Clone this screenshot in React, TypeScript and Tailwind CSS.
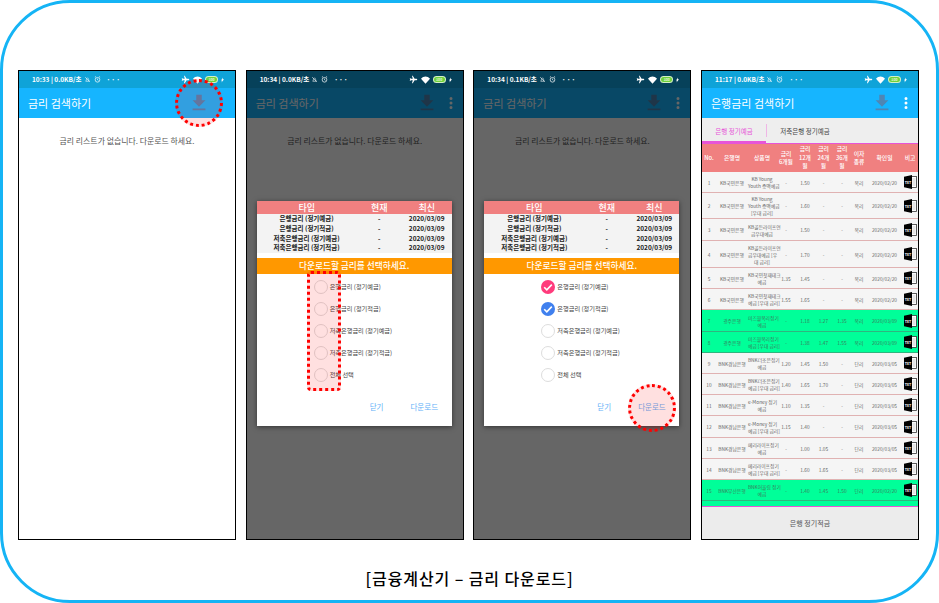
const KR = "font-['Noto_Sans_CJK_KR','Noto_Sans',sans-serif]";

const DownloadIcon = () => (
  <svg viewBox="0 0 24 24" className="w-[22px] h-[22px]" fill="#4f86b4">
    <path d="M19 9h-4V3H9v6H5l7 7 7-7zM5 18v2h14v-2H5z" />
  </svg>
);

const Dots = () => (
  <svg viewBox="0 0 24 24" className="w-[18px] h-[18px]" fill="#ffffff">
    <path d="M12 8a2 2 0 1 0 0-4 2 2 0 0 0 0 4zm0 2a2 2 0 1 0 0 4 2 2 0 0 0 0-4zm0 6a2 2 0 1 0 0 4 2 2 0 0 0 0-4z" />
  </svg>
);

const StatusBar = ({ time, speed, dim = false }: { time: string; speed: string; dim?: boolean }) => (
  <div className={`h-[17px] ${dim ? "bg-[#06415a]" : "bg-[#0fa3d8]"} flex items-center pl-[13px] pr-[11px] text-white text-[6.500px] font-bold shrink-0`}>
    <span>{time} | {speed}/초</span>
    <svg viewBox="0 0 12 12" className="w-[7px] h-[7px] ml-[2px]" fill="none" stroke="#fff" strokeWidth="1">
      <path d="M3 9c1-1 1-5 3-6 2 1 2 5 3 6zM2 2l8 8" />
    </svg>
    <svg viewBox="0 0 12 12" className="w-[7px] h-[7px] ml-[3px]" fill="none" stroke="#fff" strokeWidth="1.2">
      <circle cx="6" cy="6.5" r="4" />
      <path d="M6 4.5v2l1.500 1M1.500 2l2-1M10.500 2l-2-1" />
    </svg>
    <span className="ml-[6px] tracking-[1px]">···</span>
    <div className="flex-1" />
    <svg viewBox="0 0 12 12" className="w-[9px] h-[9px]" fill="#fff">
      <path d="M11 6c0-.5-.5-1-1-1H7.500L5 1H4l1 4H2.500L1.500 4H1l.5 2-.5 2h.5l1-1H5L4 11h1l2.500-4H10c.5 0 1-.5 1-1z" />
    </svg>
    <svg viewBox="0 0 12 10" className="w-[9px] h-[8px] ml-[3px]" fill="#fff">
      <path d="M0 3.200C3.500-.5 8.500-.5 12 3.200L6 10z" />
    </svg>
    <div className="ml-[3px] w-[13px] h-[7px] rounded-full border border-white/70 bg-[#6fd13c] flex items-center justify-center text-[3.500px] text-white/80">
      100
    </div>
    <svg viewBox="0 0 6 10" className="w-[3px] h-[6px] ml-[3px]" fill="#fff">
      <path d="M4 0L0 6h2L1 10l5-6.500H3.500z" />
    </svg>
  </div>
);

const AppHeader = ({ title, dots = true }: { title: string; dots?: boolean }) => (
  <div className="h-[30px] bg-[#16b5ff] flex items-center pl-[9px] pr-[3px] shrink-0">
    <span className="text-white text-[11px] flex-1">{title}</span>
    <div className="mr-[4px]"><DownloadIcon /></div>
    <div className="w-[18px] flex justify-center">{dots ? <Dots /> : null}</div>
  </div>
);

const Empty = () => (
  <div className="flex-1 bg-white pt-[16px] text-center text-[7.900px] leading-[14px] text-[#555]">
    금리 리스트가 없습니다. 다운로드 하세요.
  </div>
);

const Phone = ({ children }: { children: React.ReactNode }) => (
  <div className="relative w-[218px] h-[470px] border border-black bg-white flex flex-col overflow-hidden">
    {children}
  </div>
);

const dlRows = [
  ["은행금리 (정기예금)", "2020/03/09"],
  ["은행금리 (정기적금)", "2020/03/09"],
  ["저축은행금리 (정기예금)", "2020/03/09"],
  ["저축은행금리 (정기적금)", "2020/03/09"],
];

const Radio = ({ kind }: { kind: "none" | "pink" | "blue" }) => {
  if (kind === "none") {
    return <div className="w-[14px] h-[14px] rounded-full border-[1.500px] border-[#dddddd] bg-white" />;
  }
  return (
    <div className={kind === "pink" ? "w-[14px] h-[14px] rounded-full bg-[#ff3b7c] flex items-center justify-center" : "w-[14px] h-[14px] rounded-full bg-[#4080ee] flex items-center justify-center"}>
      <svg viewBox="0 0 14 14" className="w-[14px] h-[14px]" fill="none" stroke="#fff" strokeWidth="1.600">
        <path d="M3.200 7.200l2.600 2.600 5-5.200" />
      </svg>
    </div>
  );
};

const Dialog = ({ checks }: { checks: ("none" | "pink" | "blue")[] }) => {
  const opts = ["은행금리 (정기예금)", "은행금리 (정기적금)", "저축은행금리 (정기예금)", "저축은행금리 (정기적금)", "전체 선택"];
  return (
    <div className="absolute left-0 right-0 bottom-0 top-[17px] bg-black/60 pt-[113px] pl-[10px]">
      <div className="w-[195px] h-[225px] bg-white shadow-[0_1px_5px_rgba(0,0,0,0.5)] flex flex-col">
        <div className="grid grid-cols-[100px_45px_50px] h-[13px] bg-[#f08080] text-white text-[9px] leading-[13px] font-medium text-center">
          <span>타입</span><span>현재</span><span>최신</span>
        </div>
        <div className="bg-[#f3f3f3]">
          {dlRows.map((r) => (
            <div key={r[0]} className="grid grid-cols-[100px_45px_50px] h-[9.750px] text-[6.500px] leading-[9.750px] font-bold text-center text-[#222]">
              <span>{r[0]}</span><span>-</span><span>{r[1]}</span>
            </div>
          ))}
        </div>
        <div className="mt-[5px] h-[16px] bg-[#ff9800] text-white text-[8.700px] leading-[16px] font-medium text-center">
          다운로드할 금리를 선택하세요.
        </div>
        <div className="pt-[2px] pl-[57px]">
          {opts.map((o, i) => (
            <div key={o} className="h-[22px] flex items-center gap-[2px] text-[6.200px] text-[#444]">
              <Radio kind={checks[i]} />
              <span>{o}</span>
            </div>
          ))}
        </div>
        <div className="mt-[9px] flex text-[7.500px] leading-[24px] text-[#62b0f7]">
          <span className="ml-[113px]">닫기</span>
          <span className="ml-[27px]">다운로드</span>
        </div>
      </div>
    </div>
  );
};

type Row = { p: string; bank: string; name: string; r: string[]; t: string; d: string; h: string; g?: boolean };

const cols = "grid grid-cols-[14px_32px_28px_20px_18px_19px_18px_16px_35px_16px]";
const A = "KB국민은행", B = "BNK경남은행";
const rows: Row[] = [
  { p: "1", bank: A, name: "KB Young\nYouth 증액예금", r: ["-", "1.50", "-", "-"], t: "복리", d: "2020/02/20", h: "h-[21px]" },
  { p: "2", bank: A, name: "KB Young\nYouth 증액예금\n[우대 금리]", r: ["-", "1.60", "-", "-"], t: "복리", d: "2020/02/20", h: "h-[26px]" },
  { p: "3", bank: A, name: "KB골든라이프연\n금우대예금", r: ["-", "1.50", "-", "-"], t: "복리", d: "2020/02/20", h: "h-[22px]" },
  { p: "4", bank: A, name: "KB골든라이프연\n금우대예금 [우\n대 금리]", r: ["-", "1.70", "-", "-"], t: "복리", d: "2020/02/20", h: "h-[27px]" },
  { p: "5", bank: A, name: "KB국민첫재테크\n예금", r: ["1.35", "1.45", "-", "-"], t: "복리", d: "2020/02/20", h: "h-[21px]" },
  { p: "6", bank: A, name: "KB국민첫재테크\n예금 [우대 금리]", r: ["1.55", "1.65", "-", "-"], t: "복리", d: "2020/02/20", h: "h-[21px]" },
  { p: "7", bank: "광주은행", name: "미즈월복리정기\n예금", r: ["-", "1.18", "1.27", "1.35"], t: "복리", d: "2020/03/09", h: "h-[22px]", g: true },
  { p: "8", bank: "광주은행", name: "미즈월복리정기\n예금 [우대 금리]", r: ["-", "1.38", "1.47", "1.55"], t: "복리", d: "2020/03/09", h: "h-[21px]", g: true },
  { p: "9", bank: B, name: "BNK더조은정기\n예금", r: ["1.20", "1.45", "1.50", "-"], t: "단리", d: "2020/03/05", h: "h-[21px]" },
  { p: "10", bank: B, name: "BNK더조은정기\n예금 [우대 금리]", r: ["1.40", "1.65", "1.70", "-"], t: "단리", d: "2020/03/05", h: "h-[21px]" },
  { p: "11", bank: B, name: "e-Money 정기\n예금", r: ["1.10", "1.35", "-", "-"], t: "단리", d: "2020/03/05", h: "h-[21px]" },
  { p: "12", bank: B, name: "e-Money 정기\n예금 [우대 금리]", r: ["1.15", "1.40", "-", "-"], t: "단리", d: "2020/03/05", h: "h-[22px]" },
  { p: "13", bank: B, name: "메리라이프정기\n예금", r: ["-", "1.00", "1.05", "-"], t: "단리", d: "2020/03/05", h: "h-[21px]" },
  { p: "14", bank: B, name: "메리라이프정기\n예금 [우대 금리]", r: ["-", "1.60", "1.65", "-"], t: "단리", d: "2020/03/05", h: "h-[21px]" },
  { p: "15", bank: "BNK부산은행", name: "BNK어울림 정기\n예금", r: ["-", "1.40", "1.45", "1.50"], t: "단리", d: "2020/02/20", h: "h-[21px]", g: true },
];

const TxtIcon = () => (
  <svg viewBox="0 0 13 14" className="w-[13px] h-[14px]">
    <rect x="7" y="1.500" width="5.500" height="11" fill="#fff" stroke="#333" strokeWidth="0.800" />
    <path d="M8.500 4h3M8.500 6h3M8.500 8h3M8.500 10h3" stroke="#aaa" strokeWidth="0.600" />
    <path d="M0 1.800L8 0v14L0 12.200z" fill="#000" />
    <text x="4" y="8.700" fontSize="3.600" fontWeight="700" fill="#fff" textAnchor="middle">TXT</text>
  </svg>
);

const headCells = ["No.", "은행명", "상품명", "금리\n6개월", "금리\n12개\n월", "금리\n24개\n월", "금리\n36개\n월", "이자\n종류", "확인일", "비고"];

const RateTable = () => (
  <div className="flex-1 min-h-0 overflow-hidden flex flex-col">
    <div className={`${cols} h-[28px] shrink-0 bg-[#f08080] text-white text-[5.800px] leading-[8.500px] font-medium text-center items-center whitespace-pre-line`}>
      {headCells.map((c) => <span key={c}>{c}</span>)}
    </div>
    {rows.map((x) => (
      <div
        key={x.p}
        className={`${cols} ${x.h} shrink-0 items-center text-center text-[4.800px] leading-[7px] border-b-[1.500px] ${x.g ? "bg-[#00ff99] border-[#2fb57f] text-[#3d7a5c]" : "bg-[#f5f5f5] border-[#e0b2b2] text-[#666]"}`}
      >
        <span>{x.p}</span>
        <span className="whitespace-nowrap">{x.bank}</span>
        <span className="whitespace-pre">{x.name}</span>
        {x.r.map((v, i) => <span key={i}>{v}</span>)}
        <span>{x.t}</span>
        <span>{x.d}</span>
        <span className="flex justify-center pl-[2px]"><TxtIcon /></span>
      </div>
    ))}
    <div className="flex-1 bg-[#00ff99]" />
  </div>
);

const Tabs = () => (
  <div className="h-[26px] bg-[#eeeeee] border-b border-[#e754d8] flex shrink-0 text-[6.500px]">
    <div className="w-[64px] border-b-[3px] border-[#e754d8] text-[#e754d8] text-center leading-[26px] h-[26px]">
      은행 정기예금
    </div>
    <div className="w-px h-[13px] mt-[6px] bg-[#efb6e6]" />
    <div className="w-[76px] text-center leading-[26px] text-[#444]">저축은행 정기예금</div>
  </div>
);

export default function App() {
  return (
    <div className={`${KR} w-[939px] h-[603px] bg-white rounded-[70px] border-[3px] border-[#15b4f5] overflow-hidden`}>
      <div className="pt-[67px] pl-[15px] pr-[17px] flex justify-between">
        <Phone>
          <StatusBar time="10:33" speed="0.0KB" />
          <AppHeader title="금리 검색하기" dots={false} />
          <Empty />
          <div className="absolute left-[156px] top-[8px] w-[48px] h-[48px] rounded-full border-[3px] border-dotted border-[#ff0000] bg-[#ff0000]/12" />
        </Phone>
        <Phone>
          <StatusBar time="10:34" speed="0.0KB" dim />
          <AppHeader title="금리 검색하기" />
          <Empty />
          <Dialog checks={["none", "none", "none", "none", "none"]} />
          <div className="absolute left-[60px] top-[200px] w-[34px] h-[120px] rounded-[4px] border-[3px] border-dotted border-[#ff0000] bg-[#ff0000]/12" />
        </Phone>
        <Phone>
          <StatusBar time="10:34" speed="0.1KB" dim />
          <AppHeader title="금리 검색하기" />
          <Empty />
          <Dialog checks={["pink", "blue", "none", "none", "none"]} />
          <div className="absolute left-[154px] top-[313px] w-[48px] h-[48px] rounded-full border-[3px] border-dotted border-[#ff0000] bg-[#ff0000]/12" />
        </Phone>
        <Phone>
          <StatusBar time="11:17" speed="0.0KB" />
          <AppHeader title="은행금리 검색하기" />
          <Tabs />
          <RateTable />
          <div className="h-[33px] shrink-0 bg-[#ececec] border-t border-[#e754d8] flex items-center justify-center text-[7px] text-[#555]">
            은행 정기적금
          </div>
        </Phone>
      </div>
      <div className="mt-[28px] text-center text-[16px] tracking-[0.900px] leading-[20px] text-black font-medium">
        [금융계산기 – 금리 다운로드]
      </div>
    </div>
  );
}
